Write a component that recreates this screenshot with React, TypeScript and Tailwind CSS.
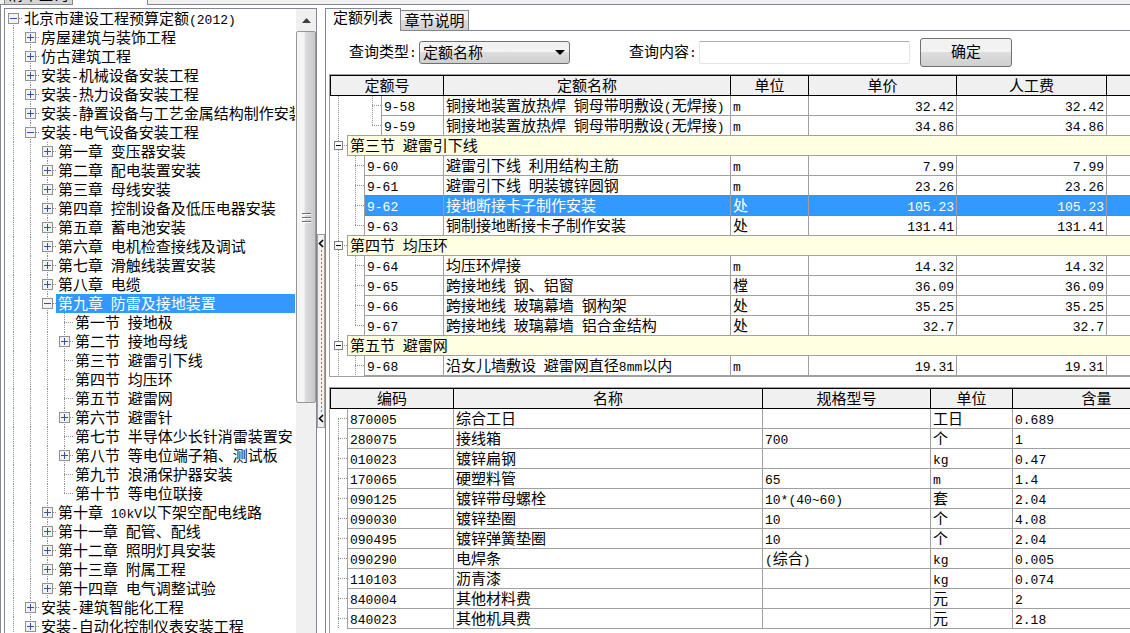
import React from 'react';
import clsx from 'clsx';

type NodeKind = 'plus' | 'minus' | 'root' | 'leaf' | 'end' | 'line' | 'none' | 'first';

interface TreeItem {
  depth: number;
  kind: NodeKind;
  label: string;
  selected?: boolean;
}

interface QuotaRow {
  section?: string;
  code?: string;
  name?: string;
  unit?: string;
  price?: string;
  labor?: string;
  guides?: NodeKind[];
  selected?: boolean;
}

const TREE: TreeItem[] = [
  { depth: 0, kind: 'root', label: '北京市建设工程预算定额(2012)' },
  { depth: 1, kind: 'plus', label: '房屋建筑与装饰工程' },
  { depth: 1, kind: 'plus', label: '仿古建筑工程' },
  { depth: 1, kind: 'plus', label: '安装-机械设备安装工程' },
  { depth: 1, kind: 'plus', label: '安装-热力设备安装工程' },
  { depth: 1, kind: 'plus', label: '安装-静置设备与工艺金属结构制作安装' },
  { depth: 1, kind: 'minus', label: '安装-电气设备安装工程' },
  { depth: 2, kind: 'plus', label: '第一章 变压器安装' },
  { depth: 2, kind: 'plus', label: '第二章 配电装置安装' },
  { depth: 2, kind: 'plus', label: '第三章 母线安装' },
  { depth: 2, kind: 'plus', label: '第四章 控制设备及低压电器安装' },
  { depth: 2, kind: 'plus', label: '第五章 蓄电池安装' },
  { depth: 2, kind: 'plus', label: '第六章 电机检查接线及调试' },
  { depth: 2, kind: 'plus', label: '第七章 滑触线装置安装' },
  { depth: 2, kind: 'plus', label: '第八章 电缆' },
  { depth: 2, kind: 'minus', label: '第九章 防雷及接地装置', selected: true },
  { depth: 3, kind: 'leaf', label: '第一节 接地极' },
  { depth: 3, kind: 'plus', label: '第二节 接地母线' },
  { depth: 3, kind: 'leaf', label: '第三节 避雷引下线' },
  { depth: 3, kind: 'leaf', label: '第四节 均压环' },
  { depth: 3, kind: 'leaf', label: '第五节 避雷网' },
  { depth: 3, kind: 'plus', label: '第六节 避雷针' },
  { depth: 3, kind: 'leaf', label: '第七节 半导体少长针消雷装置安' },
  { depth: 3, kind: 'plus', label: '第八节 等电位端子箱、测试板' },
  { depth: 3, kind: 'leaf', label: '第九节 浪涌保护器安装' },
  { depth: 3, kind: 'end', label: '第十节 等电位联接' },
  { depth: 2, kind: 'plus', label: '第十章 10kV以下架空配电线路' },
  { depth: 2, kind: 'plus', label: '第十一章 配管、配线' },
  { depth: 2, kind: 'plus', label: '第十二章 照明灯具安装' },
  { depth: 2, kind: 'plus', label: '第十三章 附属工程' },
  { depth: 2, kind: 'plus', label: '第十四章 电气调整试验' },
  { depth: 1, kind: 'plus', label: '安装-建筑智能化工程' },
  { depth: 1, kind: 'plus', label: '安装-自动化控制仪表安装工程' },
];

const QUOTAS: QuotaRow[] = [
  { code: '9-58', name: '铜接地装置放热焊 铜母带明敷设(无焊接)', unit: 'm', price: '32.42', labor: '32.42', guides: ['line', 'none', 'leaf'] },
  { code: '9-59', name: '铜接地装置放热焊 铜母带明敷设(无焊接)', unit: 'm', price: '34.86', labor: '34.86', guides: ['line', 'none', 'end'] },
  { section: '第三节 避雷引下线' },
  { code: '9-60', name: '避雷引下线 利用结构主筋', unit: 'm', price: '7.99', labor: '7.99', guides: ['line', 'leaf'] },
  { code: '9-61', name: '避雷引下线 明装镀锌圆钢', unit: 'm', price: '23.26', labor: '23.26', guides: ['line', 'leaf'] },
  { code: '9-62', name: '接地断接卡子制作安装', unit: '处', price: '105.23', labor: '105.23', guides: ['line', 'leaf'], selected: true },
  { code: '9-63', name: '铜制接地断接卡子制作安装', unit: '处', price: '131.41', labor: '131.41', guides: ['line', 'end'] },
  { section: '第四节 均压环' },
  { code: '9-64', name: '均压环焊接', unit: 'm', price: '14.32', labor: '14.32', guides: ['line', 'leaf'] },
  { code: '9-65', name: '跨接地线 钢、铝窗', unit: '樘', price: '36.09', labor: '36.09', guides: ['line', 'leaf'] },
  { code: '9-66', name: '跨接地线 玻璃幕墙 钢构架', unit: '处', price: '35.25', labor: '35.25', guides: ['line', 'leaf'] },
  { code: '9-67', name: '跨接地线 玻璃幕墙 铝合金结构', unit: '处', price: '32.7', labor: '32.7', guides: ['line', 'end'] },
  { section: '第五节 避雷网' },
  { code: '9-68', name: '沿女儿墙敷设 避雷网直径8mm以内', unit: 'm', price: '19.31', labor: '19.31', guides: ['line', 'leaf'] },
];

// code, name, spec, unit, amount
const MATERIALS: string[][] = [
  ['870005', '综合工日', '', '工日', '0.689'],
  ['280075', '接线箱', '700', '个', '1'],
  ['010023', '镀锌扁钢', '', 'kg', '0.47'],
  ['170065', '硬塑料管', '65', 'm', '1.4'],
  ['090125', '镀锌带母螺栓', '10*(40~60)', '套', '2.04'],
  ['090030', '镀锌垫圈', '10', '个', '4.08'],
  ['090495', '镀锌弹簧垫圈', '10', '个', '2.04'],
  ['090290', '电焊条', '(综合)', 'kg', '0.005'],
  ['110103', '沥青漆', '', 'kg', '0.074'],
  ['840004', '其他材料费', '', '元', '2'],
  ['840023', '其他机具费', '', '元', '2.18'],
];

// Half-width runs go in a monospaced face, like the Song bitmap fonts do
function Txt({ children }: { children: string }) {
  return (
    <>
      {children.split(/([\x20-\x7e]+)/).map((part, i) =>
        i % 2 === 1 ? (
          <span key={i} className="font-['Liberation_Mono',monospace] text-[13px] leading-none">{part}</span>
        ) : (
          part
        )
      )}
    </>
  );
}

function Guide({ kind, height, plain }: { kind: NodeKind; height: number; plain?: boolean }) {
  const hasBox = kind === 'plus' || kind === 'minus' || kind === 'root';
  const half = plain ? 4 : 5;
  const mid = Math.floor((height - 1) / 2) + 0.5;
  const top = kind === 'first' || kind === 'root' ? mid : 0;
  const bottom = kind === 'end' ? mid : height;
  return (
    <svg width="17" height={height} className="block shrink-0" shapeRendering="crispEdges" fill="none" aria-hidden="true">
      {kind !== 'none' && (
        <path d={`M8.5 ${top}V${bottom}`} stroke="#909090" strokeDasharray="1 1" />
      )}
      {kind !== 'none' && kind !== 'line' && (
        <path d={`M8 ${mid}H17`} stroke="#909090" strokeDasharray="1 1" />
      )}
      {hasBox && (
        <>
          <rect
            x={8.5 - half}
            y={mid - half}
            width={half * 2}
            height={half * 2}
            fill={plain ? '#ffffff' : '#f3f3f3'}
            stroke={plain ? '#808080' : '#919191'}
          />
          <path
            d={plain ? `M6 ${mid}h5` : `M5 ${mid}h7`}
            stroke={plain ? '#000000' : '#3353a4'}
          />
          {kind === 'plus' && <path d={`M8.5 ${mid - 3.5}v7`} stroke="#3353a4" />}
        </>
      )}
    </svg>
  );
}

function TreePanel() {
  return (
    <aside className="flex w-[313px] shrink-0 border border-b-0 border-[#828790] bg-white">
      <ul role="tree" className="min-w-0 flex-1 overflow-hidden pr-px">
        {TREE.map((item) => (
          <li key={item.label} role="treeitem" aria-selected={!!item.selected} className="flex h-[19px]">
            {Array.from({ length: item.depth }, (_, i) => (
              <Guide key={i} kind="line" height={19} />
            ))}
            <Guide kind={item.kind} height={19} />
            <span
              className={clsx(
                'min-w-0 flex-1 overflow-hidden whitespace-pre pl-0.5 leading-[19px]',
                item.selected && 'bg-[#3399ff] text-white'
              )}
            >
              <Txt>{item.label}</Txt>
            </span>
          </li>
        ))}
      </ul>
      <div className="flex w-5 shrink-0 flex-col bg-[#f0f0f0]">
        <button type="button" aria-label="向上滚动" className="flex h-[22px] items-center justify-center">
          <svg width="9" height="5" aria-hidden="true">
            <path d="M4.5 0L9 5H0z" fill="#404040" />
          </svg>
        </button>
        <div className="flex h-[372px] items-center justify-center rounded-[2px] border border-[#979797] bg-linear-to-r from-[#f5f5f5] from-40% via-[#dcdcde] via-45% to-[#c8c8cb]">
          <svg width="9" height="11" shapeRendering="crispEdges" aria-hidden="true">
            <path d="M0 1.5h9M0 5.5h9M0 9.5h9" stroke="#6a6a6a" />
            <path d="M0 2.5h9M0 6.5h9M0 10.5h9" stroke="#ffffff" />
          </svg>
        </div>
      </div>
    </aside>
  );
}

function Splitter() {
  return (
    <div className="w-2 shrink-0 pt-[226px]">
      <button
        type="button"
        aria-label="收起"
        className="flex h-[194px] w-full flex-col items-center border border-[#a0a0a0] bg-[#f0f0f0] py-1"
      >
        <svg width="6" height="9" aria-hidden="true">
          <path d="M5 1L1.5 4.5L5 8" fill="none" stroke="#000000" strokeWidth="1.6" />
        </svg>
        <svg width="6" height="166" shapeRendering="crispEdges" aria-hidden="true">
          <path d="M3.5 2V164" stroke="#3399ff" strokeDasharray="2 2" />
        </svg>
        <svg width="6" height="9" aria-hidden="true">
          <path d="M5 1L1.5 4.5L5 8" fill="none" stroke="#000000" strokeWidth="1.6" />
        </svg>
      </button>
    </div>
  );
}

function HeadCell({ children, first }: { children?: string; first?: boolean }) {
  return (
    <th
      className={clsx(
        'h-[21px] border-y border-r border-black bg-[#f0f0f0] p-0 text-center font-normal leading-[19px]',
        first && 'border-l'
      )}
    >
      {children}
    </th>
  );
}

interface CellProps {
  children?: string;
  right?: boolean;
  selected?: boolean;
  // bottom edge belongs to the focus frame of the selected row
  focusEdge?: boolean;
}

function Cell({ children, right, selected, focusEdge }: CellProps) {
  return (
    <td
      className={clsx(
        'h-5 whitespace-pre border-b border-r border-r-[#a0a0a0] p-0',
        focusEdge ? 'border-b-[#b8733c]' : 'border-b-[#a0a0a0]',
        selected && 'bg-[#3399ff] text-white'
      )}
    >
      <div className={clsx('h-[19px] overflow-hidden leading-[19px]', right ? 'pr-0.5 text-right' : 'pl-0.5')}>
        <Txt>{children || ''}</Txt>
      </div>
    </td>
  );
}

function QuotaTable() {
  return (
    <div className="shrink-0 overflow-hidden border border-r-0 border-[#a0a0a0]">
      <table className="w-full min-w-[840px] table-fixed border-separate border-spacing-0">
        <colgroup>
          <col className="w-[114px]" />
          <col className="w-[287px]" />
          <col className="w-[78px]" />
          <col className="w-[148px]" />
          <col className="w-[150px]" />
          <col />
        </colgroup>
        <thead>
          <tr>
            <HeadCell first>定额号</HeadCell>
            <HeadCell>定额名称</HeadCell>
            <HeadCell>单位</HeadCell>
            <HeadCell>单价</HeadCell>
            <HeadCell>人工费</HeadCell>
            <HeadCell />
          </tr>
        </thead>
        <tbody>
          {QUOTAS.map((row, index) => {
            if (row.section) {
              return (
                <tr key={row.section}>
                  <td colSpan={6} className="h-5 p-0">
                    <div className="flex h-5 items-end">
                      <Guide kind="minus" height={20} plain />
                      <span className="h-[21px] flex-1 whitespace-pre border-y border-l border-[#a0a0a0] bg-[#ffffe1] pl-0.5 leading-[19px]">
                        <Txt>{row.section}</Txt>
                      </span>
                    </div>
                  </td>
                </tr>
              );
            }
            const focusEdge = row.selected || QUOTAS[index + 1]?.selected;
            const state = { selected: row.selected, focusEdge };
            return (
              <tr key={row.code}>
                <td className="h-5 p-0">
                  <div className="flex h-5">
                    {row.guides?.map((g, i) => <Guide key={i} kind={g} height={20} />)}
                    <span
                      className={clsx(
                        'flex-1 whitespace-pre border-x border-b border-x-[#a0a0a0] pl-0.5 leading-[19px]',
                        focusEdge ? 'border-b-[#b8733c]' : 'border-b-[#a0a0a0]',
                        row.selected && 'bg-[#3399ff] text-white'
                      )}
                    >
                      <Txt>{row.code || ''}</Txt>
                    </span>
                  </div>
                </td>
                <Cell {...state}>{row.name}</Cell>
                <Cell {...state}>{row.unit}</Cell>
                <Cell {...state} right>{row.price}</Cell>
                <Cell {...state} right>{row.labor}</Cell>
                <Cell {...state} />
              </tr>
            );
          })}
        </tbody>
      </table>
    </div>
  );
}

function MaterialTable() {
  return (
    <div className="min-h-0 flex-1 overflow-hidden border-l border-t border-[#a0a0a0]">
      <table className="w-full min-w-[851px] table-fixed border-separate border-spacing-0">
        <colgroup>
          <col className="w-[124px]" />
          <col className="w-[309px]" />
          <col className="w-[168px]" />
          <col className="w-[82px]" />
          <col />
        </colgroup>
        <thead>
          <tr>
            <HeadCell first>编码</HeadCell>
            <HeadCell>名称</HeadCell>
            <HeadCell>规格型号</HeadCell>
            <HeadCell>单位</HeadCell>
            <HeadCell>含量</HeadCell>
          </tr>
        </thead>
        <tbody>
          {MATERIALS.map(([code, ...rest], i) => (
            <tr key={code}>
              <td className="h-5 p-0">
                <div className="flex h-5">
                  <Guide kind={i === 0 ? 'first' : 'leaf'} height={20} />
                  <span className="flex-1 border-x border-b border-[#a0a0a0] pl-0.5 leading-[19px]">
                    <Txt>{code}</Txt>
                  </span>
                </div>
              </td>
              {rest.map((value, j) => <Cell key={j}>{value}</Cell>)}
            </tr>
          ))}
        </tbody>
      </table>
    </div>
  );
}

function SearchBar() {
  return (
    <form className="flex h-[43px] shrink-0 items-center pl-[23px]" onSubmit={(e) => e.preventDefault()}>
      <label htmlFor="query-type" className="w-[70px] shrink-0"><Txt>查询类型:</Txt></label>
      <div className="relative w-[151px] shrink-0">
        <select
          id="query-type"
          className="block h-[23px] w-full appearance-none rounded-[3px] border border-[#707070] bg-linear-to-b from-[#f2f2f2] from-50% via-[#dddddd] via-50% to-[#cfcfcf] pl-[3px]"
        >
          <option>定额名称</option>
        </select>
        <svg width="10" height="5" className="pointer-events-none absolute right-[5px] top-[9px]" aria-hidden="true">
          <path d="M0 0h10L5 5z" fill="#000000" />
        </svg>
      </div>
      <label htmlFor="query-text" className="ml-[59px] w-[70px] shrink-0"><Txt>查询内容:</Txt></label>
      <input
        id="query-text"
        type="text"
        className="h-[23px] w-[211px] rounded-[2px] border border-[#e2e3ea] border-t-[#abadb3] bg-white px-1"
      />
      <button
        type="submit"
        className="ml-2.5 h-[29px] w-[92px] rounded-[3px] border border-[#707070] bg-linear-to-b from-[#f2f2f2] from-50% via-[#dddddd] via-50% to-[#cfcfcf]"
      >
        确定
      </button>
    </form>
  );
}

export default function App() {
  return (
    <div className="flex h-screen flex-col overflow-hidden bg-white font-['Liberation_Sans','Noto_Sans_CJK_SC',sans-serif] text-[15px] text-black">
      <div className="flex h-[5px] shrink-0 overflow-hidden bg-[#f0f0f0]">
        <div className="w-1 border-b border-[#828790]" />
        <button
          type="button"
          className="flex h-[5px] w-[69px] items-end justify-center overflow-hidden border-x border-b border-[#828790] bg-[#d5d5d7] leading-[19px]"
        >
          清单查询
        </button>
        <div className="w-[74px] bg-white" />
        <div className="flex-1 border-b border-l border-[#828790]" />
      </div>
      <div className="flex min-h-0 flex-1 border-l border-[#828790] pl-[3px] pt-[3px]">
        <TreePanel />
        <Splitter />
        <main className="flex min-w-0 flex-1 flex-col border-l border-[#828790]">
          <div role="tablist" className="flex h-[23px] shrink-0 items-end">
            <button type="button" role="tab" aria-selected="true" className="h-[23px] w-[75px] border-r border-t border-[#828790] pb-1 leading-[18px]">
              定额列表
            </button>
            <button
              type="button"
              role="tab"
              aria-selected="false"
              className="h-[21px] w-[68px] border-b border-r border-t border-[#828790] bg-linear-to-b from-[#f2f2f2] from-50% via-[#dddddd] via-50% to-[#cfcfcf] leading-[18px]"
            >
              章节说明
            </button>
            <div className="flex-1 border-b border-[#828790]" />
          </div>
          <SearchBar />
          <div className="flex min-h-0 flex-1 flex-col gap-2.5 pl-[3px]">
            <QuotaTable />
            <MaterialTable />
          </div>
        </main>
      </div>
    </div>
  );
}
